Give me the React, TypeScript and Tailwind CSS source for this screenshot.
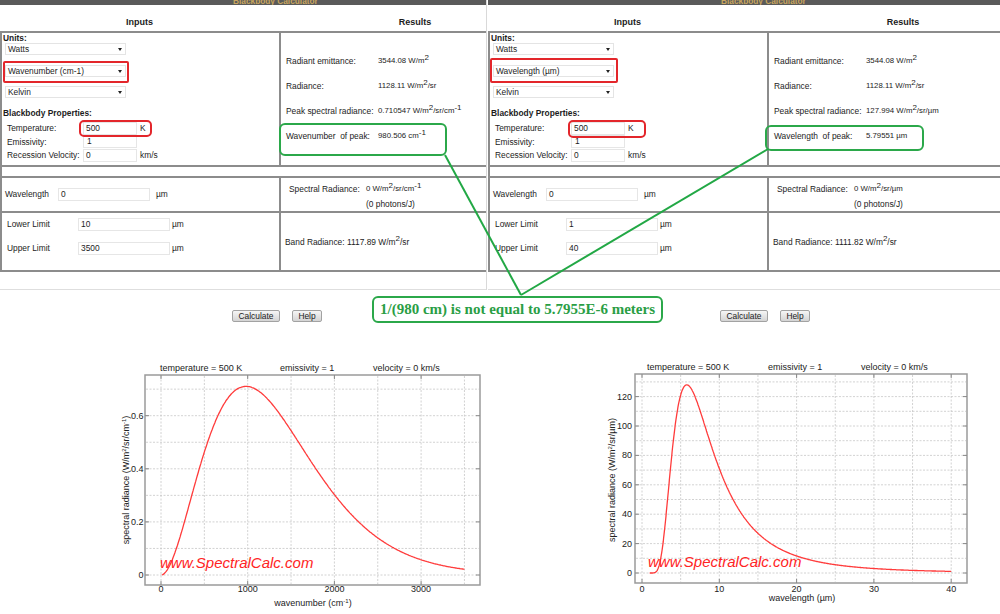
import React from 'react';

const LINE = 'border-[#8c8c8c]';

function Sup({ children }: { children: React.ReactNode }) {
  return <span className="relative top-[-3.5px] text-[8px]">{children}</span>;
}

function Select({ label }: { label: string }) {
  return (
    <div className="flex h-[12px] w-[121px] items-center justify-between border border-[#e4e4e4] bg-white pl-[2px] pr-[3px] text-[8.4px] leading-none">
      <span>{label}</span>
      <svg width="4" height="3" viewBox="0 0 4 3">
        <path d="M0 0H4L2 3Z" fill="#222" />
      </svg>
    </div>
  );
}

function Field({ value, className }: { value: string; className: string }) {
  return (
    <div className={`h-[13px] border border-[#e6e6e6] bg-white pl-[2px] text-[8.4px] leading-[11px] ${className}`}>
      {value}
    </div>
  );
}

function Btn({ label, className }: { label: string; className: string }) {
  return (
    <button
      type="button"
      className={`flex h-[12px] items-center justify-center rounded-[2px] border border-[#a2a2a2] bg-linear-to-b from-[#f6f6f6] to-[#d4d4d4] text-[8.4px] leading-none text-[#222] ${className}`}
    >
      {label}
    </button>
  );
}

type PanelProps = {
  width: string;
  unit: string;
  peak: React.ReactNode;
  peakLabel: string;
  peakValue: React.ReactNode;
  spectral: React.ReactNode;
  lower: string;
  upper: string;
  band: string;
  unitBox: string;
  tempBox: string;
  greenBox: string;
};

function Panel(p: PanelProps) {
  return (
    <div className={`relative h-[290px] shrink-0 overflow-hidden border-b border-[#dedede] ${p.width}`}>
      {/* title bar, mostly cut off at the top */}
      <div className="flex h-[5px] overflow-hidden bg-[#5a5a5a]">
        <span className="ml-[233px] mt-[-4.5px] whitespace-nowrap text-[8.3px] font-bold leading-[10px] text-[#c9a65e]">
          Blackbody Calculator
        </span>
      </div>

      <div className="w-[551px]">
        <div className="flex h-[26px] items-end pb-[3px] text-[9px] font-bold leading-[11px]">
          <div className="w-[279px] text-center">Inputs</div>
          <div className="w-[272px] text-center">Results</div>
        </div>

        <div className={`border-l-2 ${LINE} text-[8.4px] leading-none`}>
          {/* units + blackbody properties */}
          <div className={`flex h-[134px] border-t-2 ${LINE}`}>
            <div className={`w-[279px] shrink-0 border-r-2 ${LINE} pl-[1px]`}>
              <div className="h-[10px] font-bold leading-[10px]">Units:</div>
              <div className="ml-[2px] flex flex-col">
                <Select label="Watts" />
                <div className="mt-[10px]">
                  <Select label={p.unit} />
                </div>
                <div className="mt-[9px]">
                  <Select label="Kelvin" />
                </div>
              </div>
              <div className="mt-[10px] h-[10px] font-bold leading-[10px]">Blackbody Properties:</div>
              <div className="mt-[3.5px] flex flex-col pl-[4px]">
                <div className="flex h-[13.5px] items-center">
                  <span className="w-[76px]">Temperature:</span>
                  <Field value="500" className="w-[54px]" />
                  <span className="ml-[3px]">K</span>
                </div>
                <div className="flex h-[13.5px] items-center">
                  <span className="w-[76px]">Emissivity:</span>
                  <Field value="1" className="w-[54px] pl-[3px]" />
                </div>
                <div className="flex h-[13.5px] items-center">
                  <span className="w-[76px]">Recession Velocity:</span>
                  <Field value="0" className="w-[54px]" />
                  <span className="ml-[3px]">km/s</span>
                </div>
              </div>
            </div>
            <div className="flex-1 pl-[5px] pt-[15.5px]">
              <div className="flex h-[25px] items-center">
                <span className="w-[92px]">Radiant emittance:</span>
                <span className="text-[7.8px]">
                  3544.08 W/m<Sup>2</Sup>
                </span>
              </div>
              <div className="flex h-[25px] items-center">
                <span className="w-[92px]">Radiance:</span>
                <span className="text-[7.8px]">
                  1128.11 W/m<Sup>2</Sup>/sr
                </span>
              </div>
              <div className="flex h-[25px] items-center">
                <span className="w-[92px]">Peak spectral radiance:</span>
                <span className="text-[7.8px]">{p.peak}</span>
              </div>
              <div className="flex h-[25px] items-center">
                <span className="w-[92px] whitespace-pre">{p.peakLabel}</span>
                <span className="text-[7.8px]">{p.peakValue}</span>
              </div>
            </div>
          </div>

          {/* empty spacer row */}
          <div className={`h-[11px] border-t-2 ${LINE}`} />

          {/* single wavelength */}
          <div className={`flex h-[35px] border-t-2 ${LINE}`}>
            <div className={`flex w-[279px] shrink-0 items-center border-r-2 ${LINE} pl-[3px]`}>
              <span className="w-[53px]">Wavelength</span>
              <Field value="0" className="w-[92px]" />
              <span className="ml-[6px]">µm</span>
            </div>
            <div className="flex-1 pl-[8px] pt-[3.5px]">
              <div className="flex h-[15px] items-center">
                <span className="w-[77px]">Spectral Radiance:</span>
                <span className="text-[7.8px]">{p.spectral}</span>
              </div>
              <div className="flex h-[15px] items-center pl-[77px]">(0 photons/J)</div>
            </div>
          </div>

          {/* band limits */}
          <div className={`flex h-[61px] border-y-2 ${LINE}`}>
            <div className={`flex w-[279px] shrink-0 flex-col gap-[10px] border-r-2 ${LINE} pl-[5px] pt-[4px]`}>
              <div className="flex h-[14px] items-center">
                <span className="w-[71px]">Lower Limit</span>
                <Field value={p.lower} className="w-[92px]" />
                <span className="ml-[2px]">µm</span>
              </div>
              <div className="flex h-[14px] items-center">
                <span className="w-[71px]">Upper Limit</span>
                <Field value={p.upper} className="w-[92px]" />
                <span className="ml-[2px]">µm</span>
              </div>
            </div>
            <div className="flex-1 pl-[4px] pt-[24px]">
              <div className="flex h-[10px] items-center">
                Band Radiance: {p.band} W/m<Sup>2</Sup>/sr
              </div>
            </div>
          </div>
        </div>
      </div>

      {/* annotation boxes drawn over the screenshot */}
      <div className={`absolute rounded-[2px] border-2 border-[#e3262b] ${p.unitBox}`} />
      <div className={`absolute rounded-[5px] border-2 border-[#e3262b] ${p.tempBox}`} />
      <div className={`absolute rounded-[6px] border-2 border-[#2ba84a] ${p.greenBox}`} />
    </div>
  );
}

type ChartSpec = {
  frame: [number, number, number, number];
  sx: (v: number) => number;
  sy: (v: number) => number;
  xGrid: number[];
  yGrid: number[];
  xTicks: number[];
  yTicks: { v: number; label: string }[];
  yTickEnd: number;
  points: string;
  titleY: number;
  titleX: [number, number, number];
  xLabel: React.ReactNode;
  xLabelPos: [number, number];
  yLabel: React.ReactNode;
  yLabelPos: [number, number];
  mark: [number, number];
};

function Chart({ spec }: { spec: ChartSpec }) {
  const [l, t, r, b] = spec.frame;
  return (
    <svg width={380} height={259} className="shrink-0" fontFamily="'Liberation Sans', Arial, sans-serif" fontSize={9}>
      <rect x={l} y={t} width={r - l} height={b - t} fill="#fff" stroke="#9a9a9a" strokeWidth={1.5} />
      {spec.xGrid.map((v) => (
        <line key={'gx' + v} x1={spec.sx(v)} x2={spec.sx(v)} y1={t + 1} y2={b - 1} stroke="#c6c6c6" strokeWidth={0.8} strokeDasharray="2 1.5" />
      ))}
      {spec.yGrid.map((v) => (
        <line key={'gy' + v} x1={l + 1} x2={r - 1} y1={spec.sy(v)} y2={spec.sy(v)} stroke="#c6c6c6" strokeWidth={0.8} strokeDasharray="2 1.5" />
      ))}
      {spec.xTicks.map((v) => (
        <g key={'tx' + v}>
          <line x1={spec.sx(v)} x2={spec.sx(v)} y1={b} y2={b - 4} stroke="#888" />
          <line x1={spec.sx(v)} x2={spec.sx(v)} y1={t} y2={t + 4} stroke="#888" />
          <text x={spec.sx(v)} y={237} textAnchor="middle" fill="#222">
            {v}
          </text>
        </g>
      ))}
      {spec.yTicks.map((tk) => (
        <g key={'ty' + tk.v}>
          <line x1={l} x2={l + 4} y1={spec.sy(tk.v)} y2={spec.sy(tk.v)} stroke="#888" />
          <line x1={r} x2={r - 4} y1={spec.sy(tk.v)} y2={spec.sy(tk.v)} stroke="#888" />
          <text x={spec.yTickEnd} y={spec.sy(tk.v) + 3} textAnchor="end" fill="#222">
            {tk.label}
          </text>
        </g>
      ))}
      <polyline points={spec.points} fill="none" stroke="#ff3b3b" strokeWidth={1.3} />
      <text x={spec.titleX[0]} y={spec.titleY} fill="#222">temperature = 500 K</text>
      <text x={spec.titleX[1]} y={spec.titleY} fill="#222">emissivity = 1</text>
      <text x={spec.titleX[2]} y={spec.titleY} fill="#222">velocity = 0 km/s</text>
      <text x={spec.xLabelPos[0]} y={spec.xLabelPos[1]} textAnchor="middle" fill="#222">
        {spec.xLabel}
      </text>
      <text transform={`translate(${spec.yLabelPos[0]} ${spec.yLabelPos[1]}) rotate(-90)`} textAnchor="middle" fill="#222">
        {spec.yLabel}
      </text>
      <text x={spec.mark[0]} y={spec.mark[1]} fontSize={15} fontStyle="italic" fill="#ff2424">
        www.SpectralCalc.com
      </text>
    </svg>
  );
}

const range = (a: number, b: number, s: number) => {
  const out: number[] = [];
  for (let v = a; v <= b + 1e-9; v += s) out.push(Math.round(v * 1000) / 1000);
  return out;
};

// Planck curves at 500 K
const wnX = (v: number) => 51 + v * 0.0867;
const wnY = (v: number) => 220 - v * 265.5;
const wnPoints = range(10, 3500, 10)
  .map((nu) => {
    const L = (1.191042e-8 * nu ** 3) / (Math.exp((1.4387752 * nu) / 500) - 1);
    return `${wnX(nu).toFixed(1)},${wnY(L).toFixed(1)}`;
  })
  .join(' ');

const wlX = (v: number) => 47 + v * 7.73;
const wlY = (v: number) => 218 - v * 1.47;
const wlPoints = range(1, 40, 0.05)
  .map((lam) => {
    const L = 1.191042e8 / (lam ** 5 * (Math.exp(14387.752 / (lam * 500)) - 1));
    return `${wlX(lam).toFixed(1)},${wlY(L).toFixed(1)}`;
  })
  .join(' ');

const wavenumberChart: ChartSpec = {
  frame: [35, 20, 370, 230],
  sx: wnX,
  sy: wnY,
  xGrid: range(0, 3500, 500),
  yGrid: range(0, 0.7, 0.1),
  xTicks: [0, 1000, 2000, 3000],
  yTicks: [
    { v: 0, label: '0' },
    { v: 0.2, label: '0.2' },
    { v: 0.4, label: '0.4' },
    { v: 0.6, label: '0.6' },
  ],
  yTickEnd: 33.5,
  points: wnPoints,
  titleY: 16,
  titleX: [50, 170, 263],
  xLabel: (
    <>
      wavenumber (cm<tspan dy={-3} fontSize={6}>-1</tspan>
      <tspan dy={3}>)</tspan>
    </>
  ),
  xLabelPos: [203, 251],
  yLabel: (
    <>
      spectral radiance (W/m<tspan dy={-3} fontSize={6}>2</tspan>
      <tspan dy={3}>/sr/cm</tspan>
      <tspan dy={-3} fontSize={6}>-1</tspan>
      <tspan dy={3}>)</tspan>
    </>
  ),
  yLabelPos: [18.5, 125],
  mark: [50, 213],
};

const wavelengthChart: ChartSpec = {
  frame: [40, 19, 372, 228],
  sx: wlX,
  sy: wlY,
  xGrid: range(0, 40, 5),
  yGrid: range(0, 130, 10),
  xTicks: [0, 10, 20, 30, 40],
  yTicks: [0, 20, 40, 60, 80, 100, 120].map((v) => ({ v, label: String(v) })),
  yTickEnd: 37,
  points: wlPoints,
  titleY: 15,
  titleX: [52, 173, 266],
  xLabel: <>wavelength (µm)</>,
  xLabelPos: [207, 246],
  yLabel: (
    <>
      spectral radiance (W/m<tspan dy={-3} fontSize={6}>2</tspan>
      <tspan dy={3}>/sr/µm)</tspan>
    </>
  ),
  yLabelPos: [19.5, 125],
  mark: [53, 212],
};

export default function App() {
  return (
    <div className="relative h-[614px] w-[1000px] overflow-hidden bg-white font-['Liberation_Sans',Arial,sans-serif] text-[#1c1c1c]">
      <div className="flex">
        <Panel
          width="w-[486px]"
          unit="Wavenumber (cm-1)"
          peak={
            <>
              0.710547 W/m<Sup>2</Sup>/sr/cm<Sup>-1</Sup>
            </>
          }
          peakLabel="Wavenumber  of peak:"
          peakValue={
            <>
              980.506 cm<Sup>-1</Sup>
            </>
          }
          spectral={
            <>
              0 W/m<Sup>2</Sup>/sr/cm<Sup>-1</Sup>
            </>
          }
          lower="10"
          upper="3500"
          band="1117.89"
          unitBox="left-[3px] top-[61px] h-[22px] w-[126px]"
          tempBox="left-[79px] top-[120px] h-[17px] w-[73px]"
          greenBox="left-[279px] top-[123px] h-[33px] w-[168px]"
        />
        <div className="h-[290px] w-[2px] shrink-0 border-l border-[#d9d9d9] bg-white" />
        <Panel
          width="w-[512px]"
          unit="Wavelength (µm)"
          peak={
            <>
              127.994 W/m<Sup>2</Sup>/sr/µm
            </>
          }
          peakLabel="Wavelength  of peak:"
          peakValue={<>5.79551 µm</>}
          spectral={
            <>
              0 W/m<Sup>2</Sup>/sr/µm
            </>
          }
          lower="1"
          upper="40"
          band="1111.82"
          unitBox="left-[2px] top-[58px] h-[25px] w-[128px]"
          tempBox="left-[80px] top-[120px] h-[18px] w-[78px]"
          greenBox="left-[277px] top-[125px] h-[26px] w-[159px]"
        />
      </div>

      <div className="flex pt-[20px]">
        <div className="flex w-[488px] shrink-0 gap-[12px] pl-[232px]">
          <Btn label="Calculate" className="w-[48px]" />
          <Btn label="Help" className="w-[30px]" />
        </div>
        <div className="flex gap-[12px] pl-[232px]">
          <Btn label="Calculate" className="w-[48px]" />
          <Btn label="Help" className="w-[30px]" />
        </div>
      </div>

      <div className="mt-[33px] flex">
        <div className="ml-[110px]">
          <Chart spec={wavenumberChart} />
        </div>
        <div className="ml-[105px]">
          <Chart spec={wavelengthChart} />
        </div>
      </div>

      {/* green connector lines and the callout */}
      <svg className="pointer-events-none absolute left-0 top-0" width={1000} height={614}>
        <line x1={445} y1={155} x2={521} y2={295} stroke="#22a845" strokeWidth={2} />
        <line x1={768} y1={149} x2={521} y2={295} stroke="#22a845" strokeWidth={2} />
      </svg>
      <div className="absolute left-[372px] top-[296px] flex h-[27px] w-[291px] items-center justify-center rounded-[6px] border-2 border-[#2ba84a] bg-white font-['Liberation_Serif','Times_New_Roman',serif] text-[15px] font-bold leading-none text-[#2a9e45]">
        1/(980 cm) is not equal to 5.7955E-6 meters
      </div>
    </div>
  );
}
